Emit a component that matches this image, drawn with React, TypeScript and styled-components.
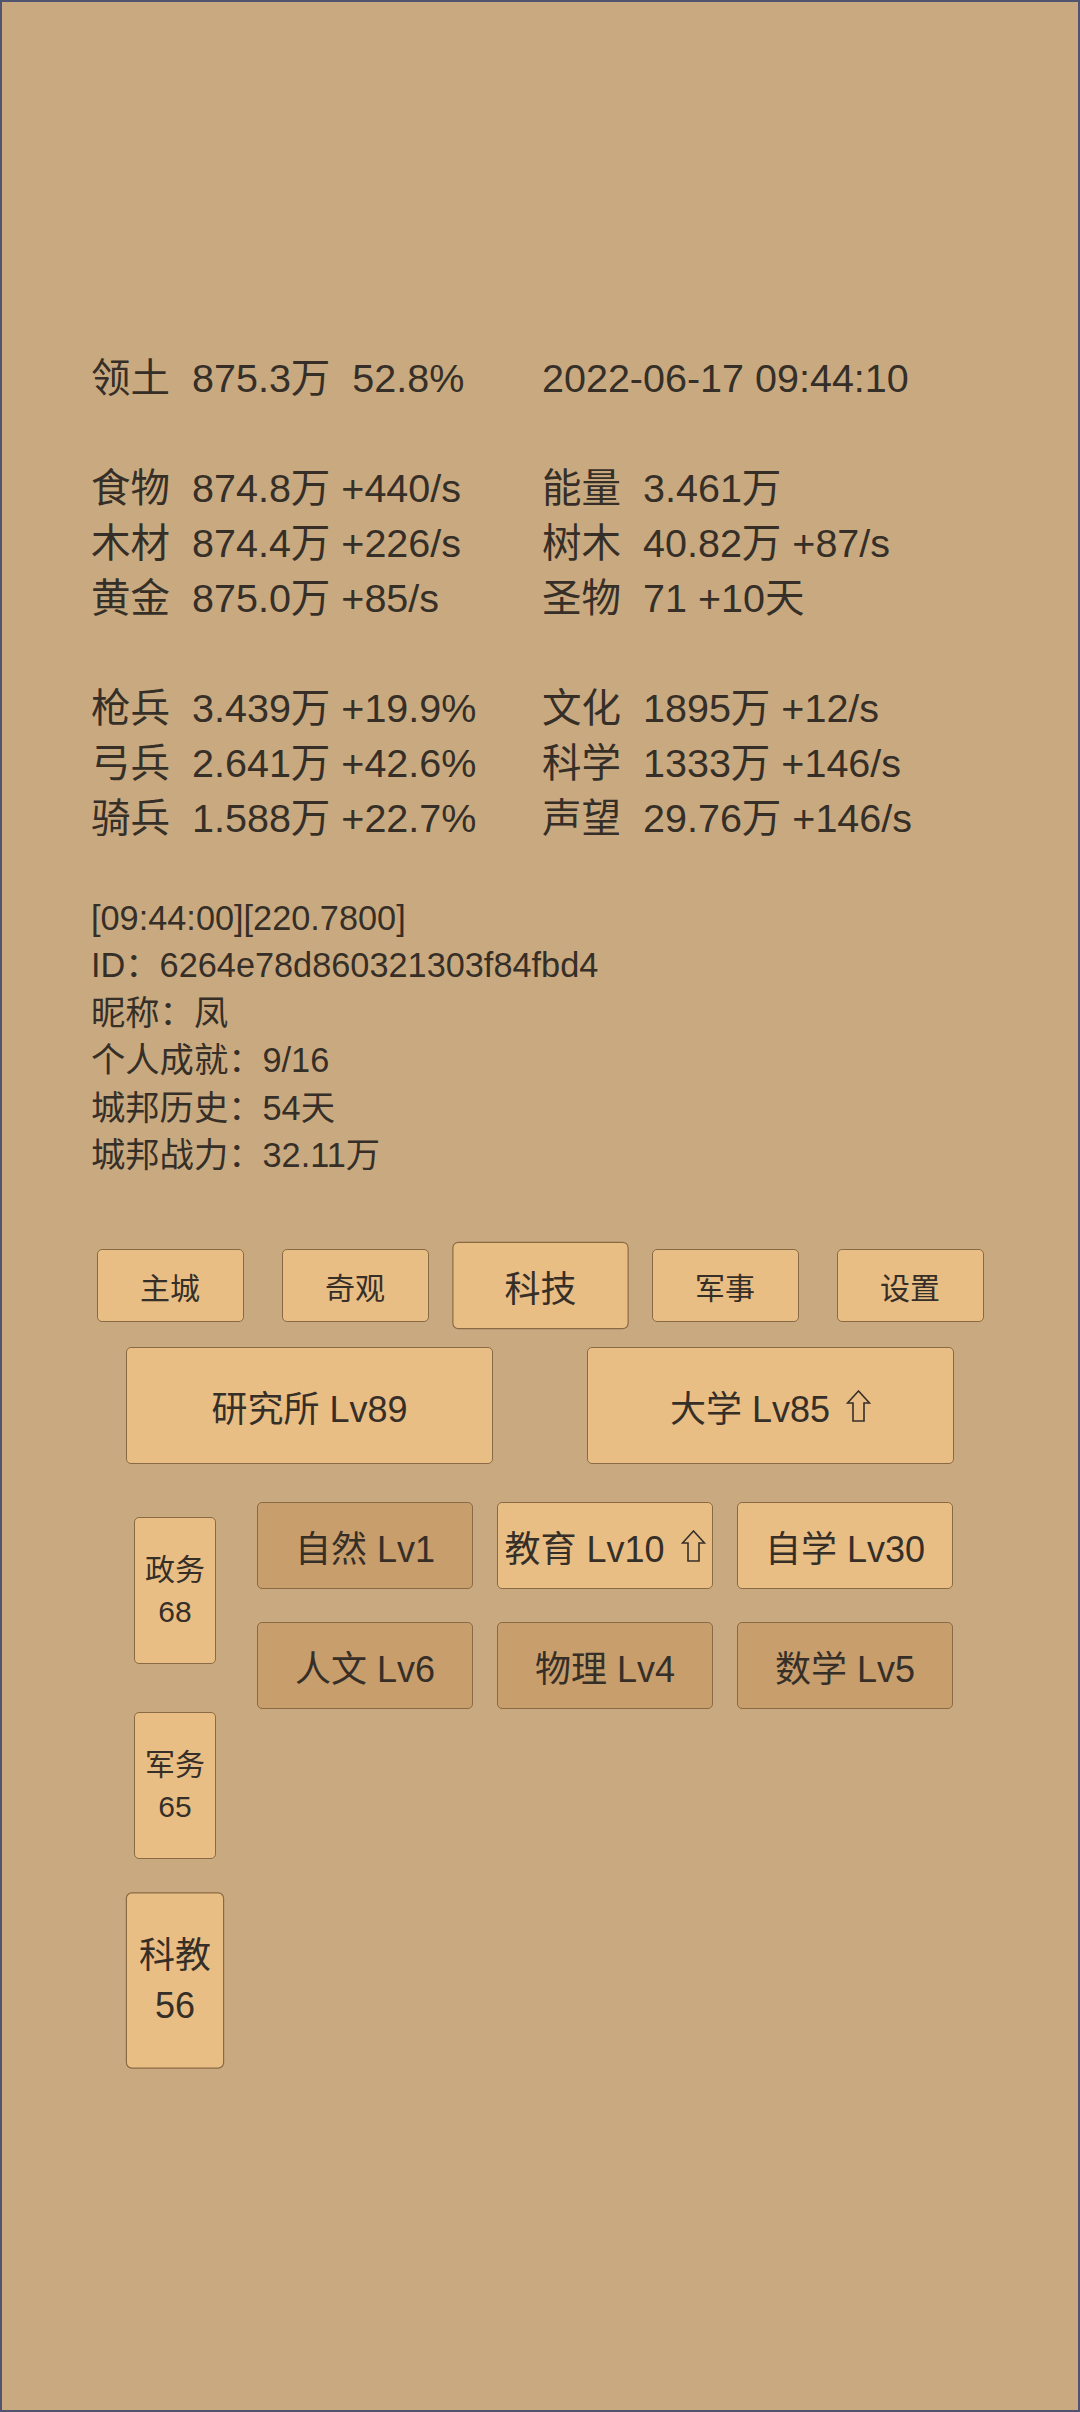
import styled, { createGlobalStyle } from 'styled-components';

const GlobalStyle = createGlobalStyle`
  html, body {
    margin: 0;
    padding: 0;
    background: #c9aa80;
  }
  * {
    box-sizing: border-box;
  }
`;

const Page = styled.div`
  width: 1080px;
  min-height: 100vh;
  height: 2412px;
  border: 2px solid #51546e;
  background: #c9aa80;
  color: #362f28;
  font-family: 'Liberation Sans', 'Noto Sans CJK SC', sans-serif;
  padding-top: 349px;
  overflow: hidden;
`;

const StatsGrid = styled.div`
  display: grid;
  grid-template-columns: 451px 1fr;
  padding-left: 89px;
  font-size: 39.5px;
  line-height: 55px;
`;

const StatCell = styled.div`
  height: 55px;
  white-space: pre;
`;

const StatLabel = styled.span`
  margin-right: 22px;
`;

const Info = styled.div`
  margin-top: 49px;
  padding-left: 89px;
  font-size: 34.3px;
  line-height: 47.4px;
`;

const InfoLine = styled.div`
  white-space: pre;
`;

const NavRow = styled.div`
  margin-top: 70px;
  display: flex;
  justify-content: center;
  gap: 38px;
`;

const Tile = styled.div<{ $dark?: boolean; $active?: boolean }>`
  display: flex;
  align-items: center;
  justify-content: center;
  background: ${({ $dark }) => ($dark ? '#c89e6d' : '#e9be85')};
  border: 1.5px solid #8a6a45;
  border-radius: 5px;
  color: #362f28;
  transform: ${({ $active }) => ($active ? 'scale(1.2)' : 'none')};
`;

const NavButton = styled(Tile)`
  width: 147px;
  height: 73px;
  font-size: 30px;
`;

const Wrap = styled.div`
  width: 828px;
  margin: 0 auto;
`;

const BuildingRow = styled(Wrap)`
  margin-top: 25px;
  display: flex;
  justify-content: space-between;
`;

const BuildingButton = styled(Tile)`
  width: 367px;
  height: 117px;
  font-size: 36px;
`;

const ArrowIcon = styled.svg`
  width: 25px;
  height: 32px;
  margin-left: 16px;
  flex-shrink: 0;
`;

const TechSection = styled(Wrap)`
  margin-top: 38px;
  display: flex;
  align-items: flex-start;
`;

const SideColumn = styled.div`
  width: 98px;
  padding-top: 15px;
  display: flex;
  flex-direction: column;
  align-items: center;
  gap: 48px;
`;

const SideButton = styled(Tile)`
  width: 82px;
  height: 147px;
  flex-direction: column;
  font-size: 30px;
  line-height: 42px;
  text-align: center;
`;

const TechGrid = styled.div`
  margin-left: 33px;
  display: grid;
  grid-template-columns: repeat(3, 216px);
  grid-auto-rows: 87px;
  column-gap: 24px;
  row-gap: 33px;
`;

const TechButton = styled(Tile)`
  font-size: 36px;
  white-space: pre;
`;

type Stat = { label: string; value: string } | null;

const STATS: [Stat, Stat][] = [
  [{ label: '领土', value: '875.3万  52.8%' }, { label: '', value: '2022-06-17 09:44:10' }],
  [null, null],
  [{ label: '食物', value: '874.8万 +440/s' }, { label: '能量', value: '3.461万' }],
  [{ label: '木材', value: '874.4万 +226/s' }, { label: '树木', value: '40.82万 +87/s' }],
  [{ label: '黄金', value: '875.0万 +85/s' }, { label: '圣物', value: '71 +10天' }],
  [null, null],
  [{ label: '枪兵', value: '3.439万 +19.9%' }, { label: '文化', value: '1895万 +12/s' }],
  [{ label: '弓兵', value: '2.641万 +42.6%' }, { label: '科学', value: '1333万 +146/s' }],
  [{ label: '骑兵', value: '1.588万 +22.7%' }, { label: '声望', value: '29.76万 +146/s' }],
];

const INFO = [
  '[09:44:00][220.7800]',
  'ID：6264e78d860321303f84fbd4',
  '昵称：凤',
  '个人成就：9/16',
  '城邦历史：54天',
  '城邦战力：32.11万',
];

const NAV = ['主城', '奇观', '科技', '军事', '设置'];
const ACTIVE_NAV = '科技';

const SIDE = [
  { name: '政务', value: 68 },
  { name: '军务', value: 65 },
  { name: '科教', value: 56, active: true },
];

const TECHS = [
  { name: '自然 Lv1', dark: true },
  { name: '教育 Lv10', up: true },
  { name: '自学 Lv30' },
  { name: '人文 Lv6', dark: true },
  { name: '物理 Lv4', dark: true },
  { name: '数学 Lv5', dark: true },
];

function UpArrow() {
  return (
    <ArrowIcon viewBox="0 0 25 32">
      <path
        d="M12.5 1 L1.5 13 H7 V31 H18 V13 H23.5 Z"
        fill="none"
        stroke="#362f28"
        strokeWidth="1.6"
        strokeLinejoin="miter"
      />
    </ArrowIcon>
  );
}

function StatView({ stat }: { stat: Stat }) {
  if (!stat) return <StatCell />;
  return (
    <StatCell>
      {stat.label && <StatLabel>{stat.label}</StatLabel>}
      {stat.value}
    </StatCell>
  );
}

export default function App() {
  return (
    <>
      <GlobalStyle />
      <Page>
        <StatsGrid>
          {STATS.map((row, i) => (
            <div key={i} style={{ display: 'contents' }}>
              <StatView stat={row[0]} />
              <StatView stat={row[1]} />
            </div>
          ))}
        </StatsGrid>

        <Info>
          {INFO.map((line) => (
            <InfoLine key={line}>{line}</InfoLine>
          ))}
        </Info>

        <NavRow>
          {NAV.map((item) => (
            <NavButton key={item} $active={item === ACTIVE_NAV}>
              {item}
            </NavButton>
          ))}
        </NavRow>

        <BuildingRow>
          <BuildingButton>研究所 Lv89</BuildingButton>
          <BuildingButton>
            大学 Lv85
            <UpArrow />
          </BuildingButton>
        </BuildingRow>

        <TechSection>
          <SideColumn>
            {SIDE.map((s) => (
              <SideButton key={s.name} $active={s.active}>
                <div>{s.name}</div>
                <div>{s.value}</div>
              </SideButton>
            ))}
          </SideColumn>
          <TechGrid>
            {TECHS.map((t) => (
              <TechButton key={t.name} $dark={t.dark}>
                {t.name}
                {t.up && <UpArrow />}
              </TechButton>
            ))}
          </TechGrid>
        </TechSection>
      </Page>
    </>
  );
}
